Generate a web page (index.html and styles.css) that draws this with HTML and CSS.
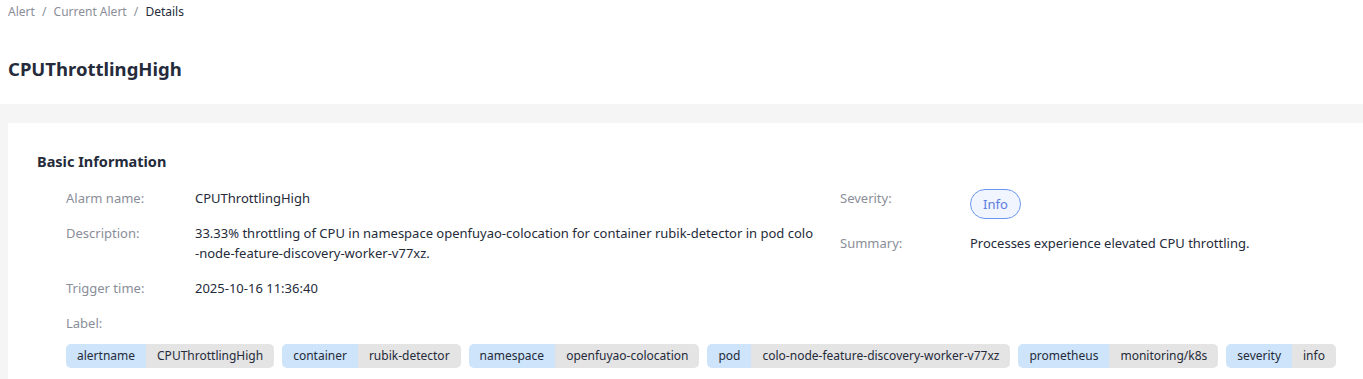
FILE: index.html
```html
<!DOCTYPE html>
<html lang="en">
<head>
  <meta charset="UTF-8">
  <title>Alert Details</title>
  <link rel="stylesheet" href="styles.css">
</head>
<body>
  <div class="page-header">
    <div class="breadcrumb">
      <span class="crumb">Alert</span>
      <span class="sep">/</span>
      <span class="crumb">Current Alert</span>
      <span class="sep">/</span>
      <span class="crumb current">Details</span>
    </div>
    <h1 class="title">CPUThrottlingHigh</h1>
  </div>

  <div class="main">
    <div class="card">
      <h2 class="card-title">Basic Information</h2>
      <div class="info">
        <div class="info-grid">
          <div class="col col-left">
            <div class="row">
              <div class="label">Alarm name:</div>
              <div class="value">CPUThrottlingHigh</div>
            </div>
            <div class="row">
              <div class="label">Description:</div>
              <div class="value wrap">33.33% throttling of CPU in namespace openfuyao-colocation for container rubik-detector in pod colo-node-feature-discovery-worker-v77xz.</div>
            </div>
            <div class="row">
              <div class="label">Trigger time:</div>
              <div class="value">2025-10-16 11:36:40</div>
            </div>
          </div>
          <div class="col col-right">
            <div class="row row-severity">
              <div class="label">Severity:</div>
              <div class="value"><span class="badge">Info</span></div>
            </div>
            <div class="row">
              <div class="label">Summary:</div>
              <div class="value">Processes experience elevated CPU throttling.</div>
            </div>
          </div>
        </div>

        <div class="row">
          <div class="label">Label:</div>
        </div>
        <div class="tags">
          <div class="tag"><span class="tag-key">alertname</span><span class="tag-val">CPUThrottlingHigh</span></div>
          <div class="tag"><span class="tag-key">container</span><span class="tag-val">rubik-detector</span></div>
          <div class="tag"><span class="tag-key">namespace</span><span class="tag-val">openfuyao-colocation</span></div>
          <div class="tag"><span class="tag-key">pod</span><span class="tag-val">colo-node-feature-discovery-worker-v77xz</span></div>
          <div class="tag"><span class="tag-key">prometheus</span><span class="tag-val">monitoring/k8s</span></div>
          <div class="tag"><span class="tag-key">severity</span><span class="tag-val">info</span></div>
        </div>
      </div>
    </div>
  </div>
</body>
</html>
```

FILE: styles.css
```css
body {
  margin: 0;
  font-family: "Noto Sans", "Liberation Sans", Arial, sans-serif;
  font-size: 13px;
  color: #252b3a;
  background: #fff;
}

/* 页头 */
.page-header {
  padding: 0 8px;
  height: 104px;
  box-sizing: border-box;
}
.breadcrumb {
  height: 24px;
  line-height: 24px;
  font-size: 12px;
  color: #8a8e99;
}
.breadcrumb .sep {
  margin: 0 4px;
}
.breadcrumb .current {
  color: #252b3a;
}
.title {
  margin: 33px 0 0;
  font-size: 18.5px;
  line-height: 24px;
  font-weight: bold;
  color: #252b3a;
}

/* 内容区 */
.main {
  background: #f5f5f5;
  padding: 19px 0 0 8px;
}
.card {
  background: #fff;
  padding: 28px 29px 30px;
}
.card-title {
  margin: 0 0 17px;
  font-size: 14.5px;
  line-height: 20px;
  font-weight: bold;
  color: #252b3a;
}
.info {
  padding-left: 29px;
}
.info-grid {
  display: grid;
  grid-template-columns: 774px 1fr;
}
.col-left {
  padding-right: 24px;
}
.row {
  display: flex;
  align-items: flex-start;
  line-height: 20px;
  margin-bottom: 15px;
}
.row-severity {
  margin-bottom: 14px;
}
.label {
  flex: 0 0 129px;
  color: #8a8e99;
}
.col-right .label {
  flex-basis: 130px;
}
.value {
  flex: 1;
  color: #252b3a;
}
.value.wrap {
  word-break: break-all;
}

.badge {
  display: inline-block;
  box-sizing: border-box;
  height: 30px;
  line-height: 28px;
  margin-top: 1px;
  padding: 0 12px;
  border: 1px solid #6c98f0;
  border-radius: 15px;
  background: #f0f5ff;
  color: #5e7ce0;
}

/* 标签 */
.tags {
  display: flex;
  gap: 8px;
  margin-top: -4px;
  font-size: 12px;
}
.tag {
  display: flex;
  flex: none;
  height: 24px;
  line-height: 24px;
  border-radius: 5px;
  overflow: hidden;
  white-space: nowrap;
}
.tag-key {
  background: #cde4fb;
  padding: 0 11px;
}
.tag-val {
  background: #e4e4e4;
  padding: 0 11px;
}
```
